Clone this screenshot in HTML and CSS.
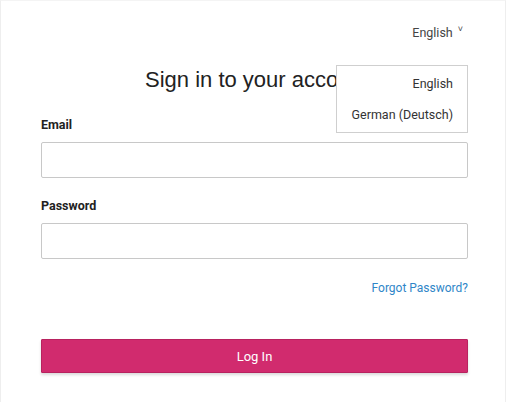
FILE: index.html
```html
<!DOCTYPE html>
<html>
<head>
<meta charset="utf-8">
<link rel="stylesheet" href="styles.css">
</head>
<body>
<div class="page">
  <div class="topbar">
    <div class="lang">
      <span class="lang-current">English</span><span class="caret">˅</span>
      <div class="menu">
        <div class="menu-item">English</div>
        <div class="menu-item">German (Deutsch)</div>
      </div>
    </div>
  </div>
  <div class="form">
    <h1 class="title">Sign in to your account</h1>
    <label class="label">Email</label>
    <div class="input"></div>
    <label class="label">Password</label>
    <div class="input"></div>
    <div class="forgot-row"><a class="forgot">Forgot Password?</a></div>
    <button class="btn">Log In</button>
  </div>
</div>
</body>
</html>
```

FILE: styles.css
```css
html, body {
  margin: 0;
  padding: 0;
  background: #ffffff;
}
.page {
  width: 506px;
  height: 402px;
  box-sizing: border-box;
  border-left: 1px solid #eeeeee;
  border-right: 1px solid #eeeeee;
  border-top: 1px solid #f4f4f4;
  font-family: Roboto, "Liberation Sans", Arial, sans-serif;
  color: #222;
}
.topbar {
  display: flex;
  justify-content: flex-end;
  padding: 0 42px 0 0;
  height: 49px;
}
.lang {
  position: relative;
  padding-top: 24px;
  font-size: 12.5px;
  color: #444;
  display: flex;
  align-items: flex-start;
}
.caret {
  font-size: 9px;
  margin-left: 5px;
  margin-top: -1px;
}
.menu {
  position: absolute;
  top: 64px;
  right: -5px;
  border: 1px solid #cfcfcf;
  background: #fff;
  padding: 10px 14px 9px 15px;
  display: flex;
  flex-direction: column;
  align-items: flex-end;
  gap: 15px;
  z-index: 2;
  white-space: nowrap;
}
.menu-item {
  font-size: 12.5px;
  color: #333;
  line-height: 16px;
}
.form {
  padding: 0 37px 0 40px;
  display: flex;
  flex-direction: column;
}
.title {
  margin: 16px 0 0 104px;
  font-family: "Liberation Sans", Arial, sans-serif;
  font-size: 22px;
  font-weight: normal;
  color: #222;
  line-height: 28px;
}
.label {
  font-size: 12.5px;
  font-weight: bold;
  color: #222;
  line-height: 16px;
}
.title + .label {
  margin-top: 23px;
}
.input {
  margin-top: 9px;
  height: 34px;
  border: 1px solid #c8c8c8;
  border-radius: 2px;
  background: #fff;
}
.input + .label {
  margin-top: 20px;
}
.forgot-row {
  display: flex;
  justify-content: flex-end;
  margin-top: 21px;
}
.forgot {
  font-size: 12px;
  color: #2f86c8;
  line-height: 16px;
}
.btn {
  margin-top: 43px;
  height: 34px;
  border: 1px solid #b8225f;
  border-radius: 1px;
  background: #d12b6e;
  color: #fff;
  font-family: Roboto, "Liberation Sans", sans-serif;
  font-size: 13px;
  box-shadow: 0 2px 3px rgba(0,0,0,0.15);
  padding: 0;
}
```
